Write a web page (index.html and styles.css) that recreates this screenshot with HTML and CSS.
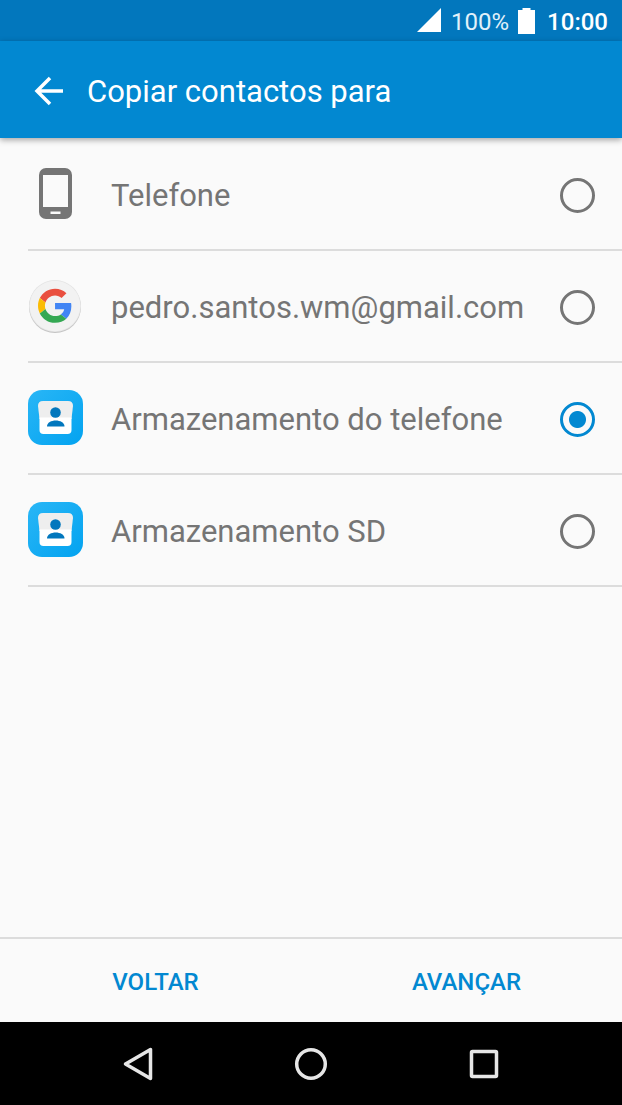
FILE: index.html
```html
<!DOCTYPE html>
<html lang="pt">
<head>
<meta charset="utf-8">
<meta name="viewport" content="width=device-width, initial-scale=1">
<title>Copiar contactos para</title>
<link rel="stylesheet" href="styles.css">
</head>
<body>
<div class="screen">
  <div class="status-bar">
    <svg class="signal" viewBox="0 0 24 24" aria-hidden="true"><path d="M0 24 24 0V24Z"/></svg>
    <span class="battery-level">100%</span>
    <svg class="battery" viewBox="0 0 17 26" aria-hidden="true"><path d="M4.500 0h8v2H17v24H0V2h4.500z"/></svg>
    <span class="clock">10:00</span>
  </div>

  <header class="app-bar">
    <button class="back" type="button" aria-label="Voltar atrás">
      <svg viewBox="0 0 28 28" aria-hidden="true"><path d="M28 13H2M15 0 2 13l13 13"/></svg>
    </button>
    <h1 class="title">Copiar contactos para</h1>
  </header>

  <main class="options">
    <label class="option">
      <svg class="option-icon" viewBox="0 0 56 56" aria-hidden="true">
        <rect x="11" y="0" width="33" height="51" rx="7" fill="#757575"/>
        <path d="M15 7h25v32H15z" fill="#fafafa"/>
        <path d="M22.500 43.500h10V46h-10z" fill="#fafafa"/>
      </svg>
      <span class="option-name">Telefone</span>
      <input class="radio" type="radio" name="destination">
    </label>
    <label class="option">
      <svg class="option-icon" viewBox="0 1 56 56" aria-hidden="true">
        <circle cx="27" cy="28" r="26" fill="#c4c4c4"/>
        <circle cx="27" cy="27" r="26" fill="#e4e4e4"/>
        <circle cx="27" cy="27" r="25.300" fill="#f2f2f2"/>
        <g transform="translate(10 9.700) scale(.71)">
          <path fill="#e94f3f" d="M24 9.500c3.540 0 6.710 1.220 9.210 3.600l6.850-6.850C35.900 2.380 30.470 0 24 0 14.620 0 6.510 5.380 2.560 13.220l7.980 6.190C12.430 13.720 17.740 9.500 24 9.500z"/>
          <path fill="#4285f4" d="M46.980 24.550c0-1.570-.15-3.090-.38-4.550H24v9.020h12.940c-.58 2.960-2.260 5.480-4.780 7.180l7.730 6c4.510-4.180 7.090-10.360 7.090-17.650z"/>
          <path fill="#fbbc05" d="M10.530 28.590c-.48-1.450-.76-2.990-.76-4.590s.27-3.140.76-4.590l-7.980-6.190C.92 16.460 0 20.120 0 24s.92 7.540 2.560 10.780z"/>
          <path fill="#34a853" d="M24 48c6.480 0 11.930-2.130 15.890-5.810l-7.730-6c-2.150 1.450-4.920 2.300-8.160 2.300-6.260 0-11.570-4.220-13.470-9.910l-7.980 6.190C6.510 42.620 14.620 48 24 48z"/>
        </g>
      </svg>
      <span class="option-name">pedro.santos.wm@gmail.com</span>
      <input class="radio" type="radio" name="destination">
    </label>
    <label class="option">
      <svg class="option-icon" viewBox="0 2 56 56" aria-hidden="true">
        <defs>
          <linearGradient id="tile" x1="0" y1="0" x2="1" y2="1">
            <stop offset="0" stop-color="#29b6f6"/>
            <stop offset="1" stop-color="#03a3f0"/>
          </linearGradient>
        </defs>
        <rect width="55" height="55" rx="14" fill="url(#tile)"/>
        <path d="M15 11h25q5 0 5 5l-1.500 13h-32L10 16q0-5 5-5z" fill="#eee"/>
        <path d="M11.500 27.500h32V40q0 4-4 4h-24q-4 0-4-4z" fill="#fff"/>
        <circle cx="27.500" cy="22.500" r="5.300" fill="#0277bd"/>
        <path d="M19 36.500c0-8 17.500-8 17.500 0z" fill="#0277bd"/>
      </svg>
      <span class="option-name">Armazenamento do telefone</span>
      <input class="radio" type="radio" name="destination" checked>
    </label>
    <label class="option">
      <svg class="option-icon" viewBox="0 2 56 56" aria-hidden="true">
        <rect width="55" height="55" rx="14" fill="url(#tile)"/>
        <path d="M15 11h25q5 0 5 5l-1.500 13h-32L10 16q0-5 5-5z" fill="#eee"/>
        <path d="M11.500 27.500h32V40q0 4-4 4h-24q-4 0-4-4z" fill="#fff"/>
        <circle cx="27.500" cy="22.500" r="5.300" fill="#0277bd"/>
        <path d="M19 36.500c0-8 17.500-8 17.500 0z" fill="#0277bd"/>
      </svg>
      <span class="option-name">Armazenamento SD</span>
      <input class="radio" type="radio" name="destination">
    </label>
  </main>

  <footer class="actions">
    <button class="action" type="button">VOLTAR</button>
    <button class="action" type="button">AVANÇAR</button>
  </footer>

  <nav class="nav-bar" aria-label="Sistema">
    <button class="nav-button" type="button" aria-label="Retroceder">
      <svg viewBox="0 0 36 36" aria-hidden="true"><path d="M30.500 3.500v29L5.500 18z"/></svg>
    </button>
    <button class="nav-button" type="button" aria-label="Início">
      <svg viewBox="0 0 36 36" aria-hidden="true"><circle cx="18" cy="18" r="14.300"/></svg>
    </button>
    <button class="nav-button" type="button" aria-label="Recentes">
      <svg viewBox="0 0 36 36" aria-hidden="true"><rect x="5.500" y="5.500" width="25" height="25" rx="1"/></svg>
    </button>
  </nav>
</div>
</body>
</html>
```

FILE: styles.css
```css
* {
  box-sizing: border-box;
}

body {
  margin: 0;
  background: #fafafa;
  color: #757575;
  font-family: Roboto, "Noto Sans", sans-serif;
}

button {
  padding: 0;
  border: 0;
  background: none;
  font: inherit;
  color: inherit;
}

svg {
  display: block;
  overflow: visible;
}

.screen {
  display: flex;
  flex-direction: column;
  min-height: 100vh;
}

.status-bar {
  display: flex;
  align-items: center;
  justify-content: flex-end;
  height: 41px;
  padding: 2px 14px 0 0;
  background: #0277bd;
  color: #fff;
  font-size: 24px;
  line-height: 28px;
}

.signal {
  width: 24px;
  height: 24px;
  margin: 0 10px 4px 0;
  fill: #fff;
}

.battery-level {
  color: #e1f1fa;
}

.battery {
  width: 17px;
  height: 26px;
  margin: 0 12px 2px 9px;
  fill: #fff;
}

.clock {
  font-weight: 500;
}

.app-bar {
  display: flex;
  align-items: center;
  gap: 24px;
  height: 97px;
  padding: 4px 28px 0 35px;
  background: #0288d1;
  color: #fff;
  box-shadow: 0 2px 6px rgba(0, 0, 0, 0.35);
}

.back svg {
  width: 28px;
  height: 28px;
  fill: none;
  stroke: #fff;
  stroke-width: 3.5;
}

.title {
  margin: 0;
  font-size: 31px;
  font-weight: 400;
  line-height: 36px;
}

.options {
  flex: 1;
  padding-top: 1px;
}

.option {
  display: flex;
  align-items: center;
  gap: 27px;
  height: 112px;
  margin-left: 28px;
  padding: 3px 27px 0 0;
  border-bottom: 2px solid #dcdcdc;
  font-size: 31px;
  line-height: 36px;
}

.option-icon {
  flex: none;
  width: 56px;
  height: 56px;
}

.option-name {
  flex: 1;
}

.radio {
  appearance: none;
  flex: none;
  width: 35px;
  height: 35px;
  margin: 0;
  border: 3px solid #757575;
  border-radius: 50%;
}

.radio:checked {
  border-color: #0288d1;
  background: radial-gradient(circle, #0288d1 8px, transparent 9px);
}

.actions {
  display: grid;
  grid-template-columns: 1fr 1fr;
  height: 85px;
  border-top: 2px solid #dcdcdc;
}

.action {
  padding-top: 2px;
  color: #0288d1;
  font-size: 24px;
  font-weight: 500;
  line-height: 28px;
}

.nav-bar {
  display: grid;
  grid-template-columns: repeat(3, 1fr);
  height: 83px;
  padding: 0 52px;
  background: #000;
}

.nav-button {
  display: grid;
  place-items: center;
}

.nav-button svg {
  width: 36px;
  height: 36px;
  fill: none;
  stroke: #e6e6e6;
  stroke-width: 3.5;
  stroke-linejoin: round;
}
```
